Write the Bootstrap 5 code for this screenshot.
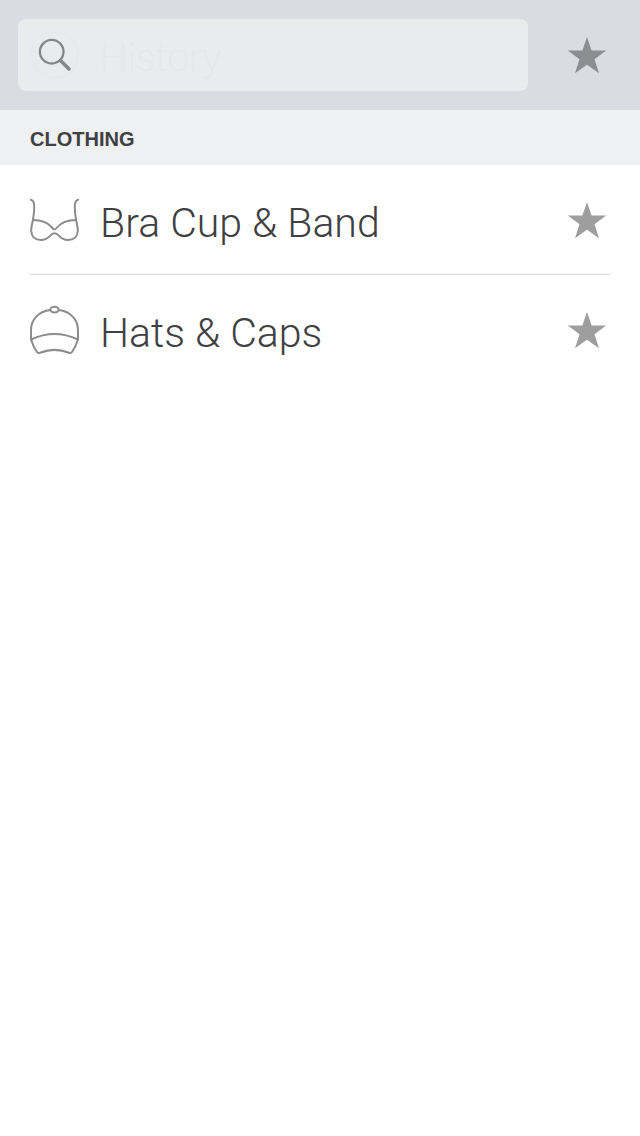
<!DOCTYPE html>
<html lang="en">
<head>
<meta charset="utf-8">
<meta name="viewport" content="width=device-width, initial-scale=1">
<title>Clothing sizes</title>
<link href="https://cdn.jsdelivr.net/npm/bootstrap@5.3.0/dist/css/bootstrap.min.css" rel="stylesheet">
<style>
  body { font-family: "Liberation Sans", sans-serif; color: #3f4041; background: #fff; }
  .top-bar { background: #d9dce1; padding: 19px 30px 19px 18px; gap: 36px; }
  .search-box { background: #eaebed; border-radius: 8px; height: 72px; padding-left: 12px; }
  .search-box .form-control { font-family: Roboto, "Liberation Sans", sans-serif; font-weight: 200; font-size: 39px; line-height: 48px; padding: 6px 12px 0 20px; color: #3f4041; box-shadow: none; }
  .search-box .form-control::placeholder { color: #e6e7ea; opacity: 1; }
  .section-title { background: #eff0f2; font-size: 20px; line-height: 24px; font-weight: 700; padding: 17px 30px 14px; }
  .item-list { padding: 0 30px; }
  .item-row { height: 110px; gap: 20px; border-bottom: 1px solid #d9d9d9; }
  .item-row:last-child { border-bottom-color: transparent; }
  .item-name { font-family: Roboto, "Liberation Sans", sans-serif; font-weight: 300; font-size: 41px; line-height: 48px; padding-top: 6px; color: #3f4041; }
  .star-btn { color: #9e9e9e; }
  .top-bar .star-btn { color: #8d8e92; }
  .line-icon { fill: none; stroke: #8c8c8c; stroke-width: 2; stroke-linecap: round; stroke-linejoin: round; }
  svg { display: block; }
</style>
</head>
<body>
<svg width="0" height="0" class="position-absolute" aria-hidden="true">
  <symbol id="star" viewBox="0 0 46 40"><path d="M23 2L27.600 15.600H42.200L30.500 24.300L35 38.200L23 29.700L11 38.200L15.500 24.300L3.800 15.600H18.400Z" fill="currentColor"/></symbol>
</svg>
<header class="top-bar d-flex align-items-center">
  <form class="search-box d-flex align-items-center flex-grow-1" role="search">
    <label for="search" class="flex-shrink-0" aria-label="Search">
      <svg width="50" height="50" viewBox="0 0 50 50" fill="none" stroke="#868788">
        <circle cx="25" cy="25" r="23" stroke="#e8e9eb" stroke-width="2"/>
        <circle cx="21.700" cy="21.700" r="11.800" stroke-width="2.300"/>
        <path d="M30.500 30.500L39 39" stroke-width="3.600" stroke-linecap="round"/>
      </svg>
    </label>
    <input id="search" type="text" class="form-control bg-transparent border-0" placeholder="History">
  </form>
  <button type="button" class="star-btn btn p-0 border-0" aria-label="Favorites"><svg width="46" height="40"><use href="#star"/></svg></button>
</header>
<main>
  <h2 class="section-title m-0">CLOTHING</h2>
  <ul class="item-list list-unstyled m-0">
    <li class="item-row d-flex align-items-center">
      <svg class="line-icon flex-shrink-0" width="50" height="50" viewBox="10 5 50 50">
        <path d="M10.800 9.800C13.500 10 14.300 13.500 14.200 18C14.100 23 13.500 26 12.900 30C12.200 34 11 37 11.200 41C11.600 47 15.500 50 21 50C30 50 29.500 43.200 34.500 43.200S39 50 48 50C53.500 50 57.400 47 57.800 41C58 37 56.800 34 56.100 30C55.500 26 54.900 23 54.800 18C54.700 13.500 55.500 10 58.200 9.800"/>
        <path d="M12.900 30C22 30 27.500 32 32 37.500C34 40 35 40 37 37.500C41.500 32 47 30 56.100 30"/>
      </svg>
      <span class="item-name flex-grow-1">Bra Cup &amp; Band</span>
      <button type="button" class="star-btn btn p-0 border-0" aria-label="Add Bra Cup &amp; Band to favorites"><svg width="46" height="40"><use href="#star"/></svg></button>
    </li>
    <li class="item-row d-flex align-items-center">
      <svg class="line-icon flex-shrink-0" width="50" height="50" viewBox="10 5 50 50">
        <ellipse cx="34.500" cy="9.600" rx="4.200" ry="2.800"/>
        <path d="M30.300 10C18 11.500 11 20 11 30V39.500C12.500 44 14.500 48.500 17 52C17.800 53.200 18.700 53.200 20 52.700C29.500 49 39.500 49 49 52.700C50.300 53.200 51.200 53.200 52 52C54.500 48.500 56.500 44 58 39.500V30C58 20 51 11.500 38.700 10"/>
        <path d="M11 39.500C27 32 42 32 58 39.500"/>
      </svg>
      <span class="item-name flex-grow-1">Hats &amp; Caps</span>
      <button type="button" class="star-btn btn p-0 border-0" aria-label="Add Hats &amp; Caps to favorites"><svg width="46" height="40"><use href="#star"/></svg></button>
    </li>
  </ul>
</main>
<script src="https://cdn.jsdelivr.net/npm/bootstrap@5.3.0/dist/js/bootstrap.bundle.min.js"></script>
</body>
</html>
